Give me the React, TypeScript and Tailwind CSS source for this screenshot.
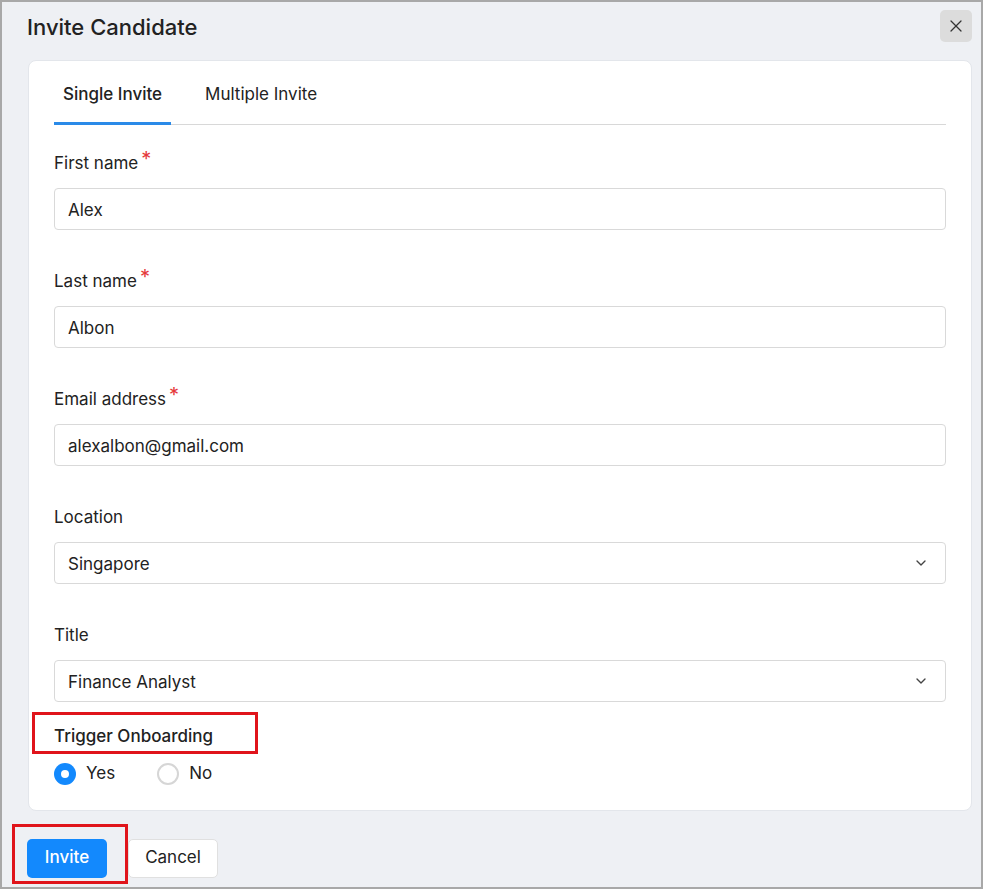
import { X, ChevronDown } from "lucide-react";

const font = { fontFamily: "Inter, 'Noto Sans', sans-serif" };

function Label({ text, required }: { text: string; required?: boolean }) {
  return (
    <div className="mt-[2px] flex h-[24px] items-center text-[17px] text-[#222]">
      <span>{text}</span>
      {required && <span className="ml-[3px] -mt-[10px] text-[20px] leading-none text-[#e5383b]">*</span>}
    </div>
  );
}

function Field({ label, value, required, select }: { label: string; value: string; required?: boolean; select?: boolean }) {
  return (
    <div>
      <Label text={label} required={required} />
      <div className="mt-[12px] flex h-[42px] items-center justify-between rounded-[4px] border border-[#d9d9d9] bg-white pl-[13px] pr-[16px] pt-[3px] text-[17px] text-[#222]">
        <span>{value}</span>
        {select && <ChevronDown size={16} strokeWidth={2} className="-mt-[3px] text-[#444]" />}
      </div>
    </div>
  );
}

export default function App() {
  return (
    <div className="h-[889px] w-[983px] overflow-hidden border-2 border-[#a8a8a8] bg-[#eef0f4]" style={font}>
      {/* Header */}
      <div className="flex h-[58px] items-start justify-between pl-[25px] pr-[9px]">
        <h1 className="mt-[12px] text-[22px] font-medium leading-[26px] text-[#222]">Invite Candidate</h1>
        <button className="mt-[8px] flex h-[32px] w-[32px] items-center justify-center rounded-[5px] bg-[#dcdcdc] text-[#333]">
          <X size={20} strokeWidth={1.5} />
        </button>
      </div>

      {/* Card */}
      <div className="ml-[26px] w-[944px] rounded-[8px] border border-[#e3e6eb] bg-white px-[25px] pb-[23px] pt-[15px]">
        <div className="flex h-[49px] border-b border-[#d8d8d8]">
          <div className="-mb-px h-[49px] border-b-[3px] border-[#2a8ae8] px-[9px] pt-[6px] text-[17px] font-medium leading-[24px] text-[#222]">
            Single Invite
          </div>
          <div className="ml-[24px] px-[10px] pt-[6px] text-[17px] leading-[24px] text-[#222]">Multiple Invite</div>
        </div>

        <div className="mt-[25px] flex flex-col gap-[38px]">
          <Field label="First name" value="Alex" required />
          <Field label="Last name" value="Albon" required />
          <Field label="Email address" value="alexalbon@gmail.com" required />
          <Field label="Location" value="Singapore" select />
          <Field label="Title" value="Finance Analyst" select />
        </div>

        <div className="-ml-[22px] mt-[10px] flex h-[42px] w-[226px] items-center border-[3px] border-[#e0141b] pl-[19px] pt-[7px] text-[17px] font-medium text-[#222]">
          Trigger Onboarding
        </div>

        <div className="mt-[7px] flex items-center text-[17px] text-[#222]">
          <span className="flex h-[22px] w-[22px] items-center justify-center rounded-full bg-[#1389fd]">
            <span className="h-[8px] w-[8px] rounded-full bg-white" />
          </span>
          <span className="ml-[10px]">Yes</span>
          <span className="ml-[42px] h-[22px] w-[22px] rounded-full border-2 border-[#d6d6d6]" />
          <span className="ml-[10px]">No</span>
        </div>
      </div>

      {/* Footer */}
      <div className="relative ml-[25px] mt-[28px] flex items-center">
        <button className="h-[39px] w-[80px] rounded-[5px] bg-[#1389fd] text-[17px] font-medium text-white">Invite</button>
        <button className="ml-[21px] h-[39px] w-[90px] rounded-[5px] border border-[#e0e0e0] bg-white text-[17px] text-[#222]">
          Cancel
        </button>
        <div className="pointer-events-none absolute -left-[15px] -top-[15px] h-[60px] w-[116px] border-[3px] border-[#e0141b]" />
      </div>
    </div>
  );
}
